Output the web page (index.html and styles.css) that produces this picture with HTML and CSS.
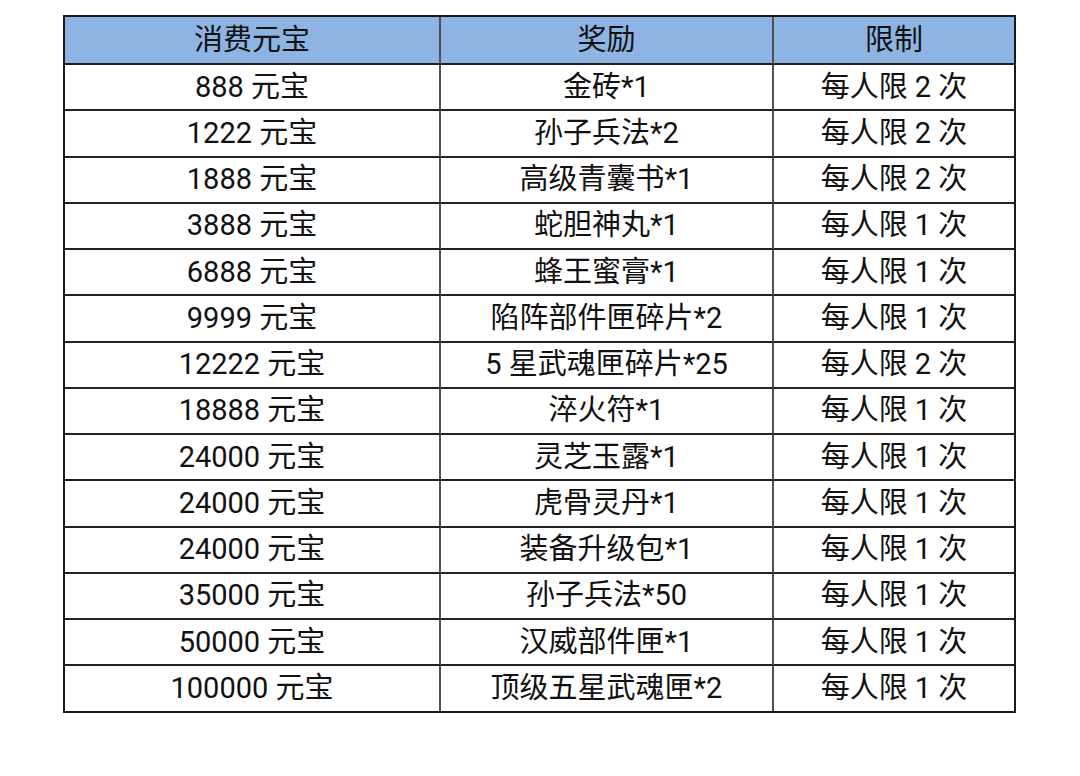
FILE: index.html
```html
<!DOCTYPE html>
<html lang="zh">
<head>
<meta charset="utf-8">
<title>消费元宝</title>
<link rel="stylesheet" href="styles.css">
</head>
<body>
<div class="table">
  <div class="cell head">消费元宝</div><div class="cell head">奖励</div><div class="cell head">限制</div>
  <div class="cell">888 元宝</div><div class="cell">金砖*1</div><div class="cell">每人限 2 次</div>
  <div class="cell">1222 元宝</div><div class="cell">孙子兵法*2</div><div class="cell">每人限 2 次</div>
  <div class="cell">1888 元宝</div><div class="cell">高级青囊书*1</div><div class="cell">每人限 2 次</div>
  <div class="cell">3888 元宝</div><div class="cell">蛇胆神丸*1</div><div class="cell">每人限 1 次</div>
  <div class="cell">6888 元宝</div><div class="cell">蜂王蜜膏*1</div><div class="cell">每人限 1 次</div>
  <div class="cell">9999 元宝</div><div class="cell">陷阵部件匣碎片*2</div><div class="cell">每人限 1 次</div>
  <div class="cell">12222 元宝</div><div class="cell">5 星武魂匣碎片*25</div><div class="cell">每人限 2 次</div>
  <div class="cell">18888 元宝</div><div class="cell">淬火符*1</div><div class="cell">每人限 1 次</div>
  <div class="cell">24000 元宝</div><div class="cell">灵芝玉露*1</div><div class="cell">每人限 1 次</div>
  <div class="cell">24000 元宝</div><div class="cell">虎骨灵丹*1</div><div class="cell">每人限 1 次</div>
  <div class="cell">24000 元宝</div><div class="cell">装备升级包*1</div><div class="cell">每人限 1 次</div>
  <div class="cell">35000 元宝</div><div class="cell">孙子兵法*50</div><div class="cell">每人限 1 次</div>
  <div class="cell">50000 元宝</div><div class="cell">汉威部件匣*1</div><div class="cell">每人限 1 次</div>
  <div class="cell last">100000 元宝</div><div class="cell last">顶级五星武魂匣*2</div><div class="cell last">每人限 1 次</div>
</div>
</body>
</html>
```
FILE: styles.css
```css
html, body {
  margin: 0;
  padding: 0;
  background: #ffffff;
}
body {
  font-family: Roboto, "Noto Sans CJK SC", sans-serif;
  color: #111111;
}
.table {
  margin: 15px 0 0 63px;
  width: 953px;
  box-sizing: border-box;
  border: 2px solid #1a1a1a;
  display: grid;
  grid-template-columns: 376px 333px 240px;
}
.cell {
  box-sizing: border-box;
  height: 46.26px;
  border-bottom: 2px solid #222222;
  border-right: 2px solid #505050;
  display: flex;
  align-items: center;
  justify-content: center;
  font-size: 29px;
  line-height: 1;
}
.cell:nth-child(3n) {
  border-right: none;
}
.head {
  height: 48px;
  background: #8db4e2;
}
.last {
  border-bottom: none;
  height: 44.26px;
}
```
